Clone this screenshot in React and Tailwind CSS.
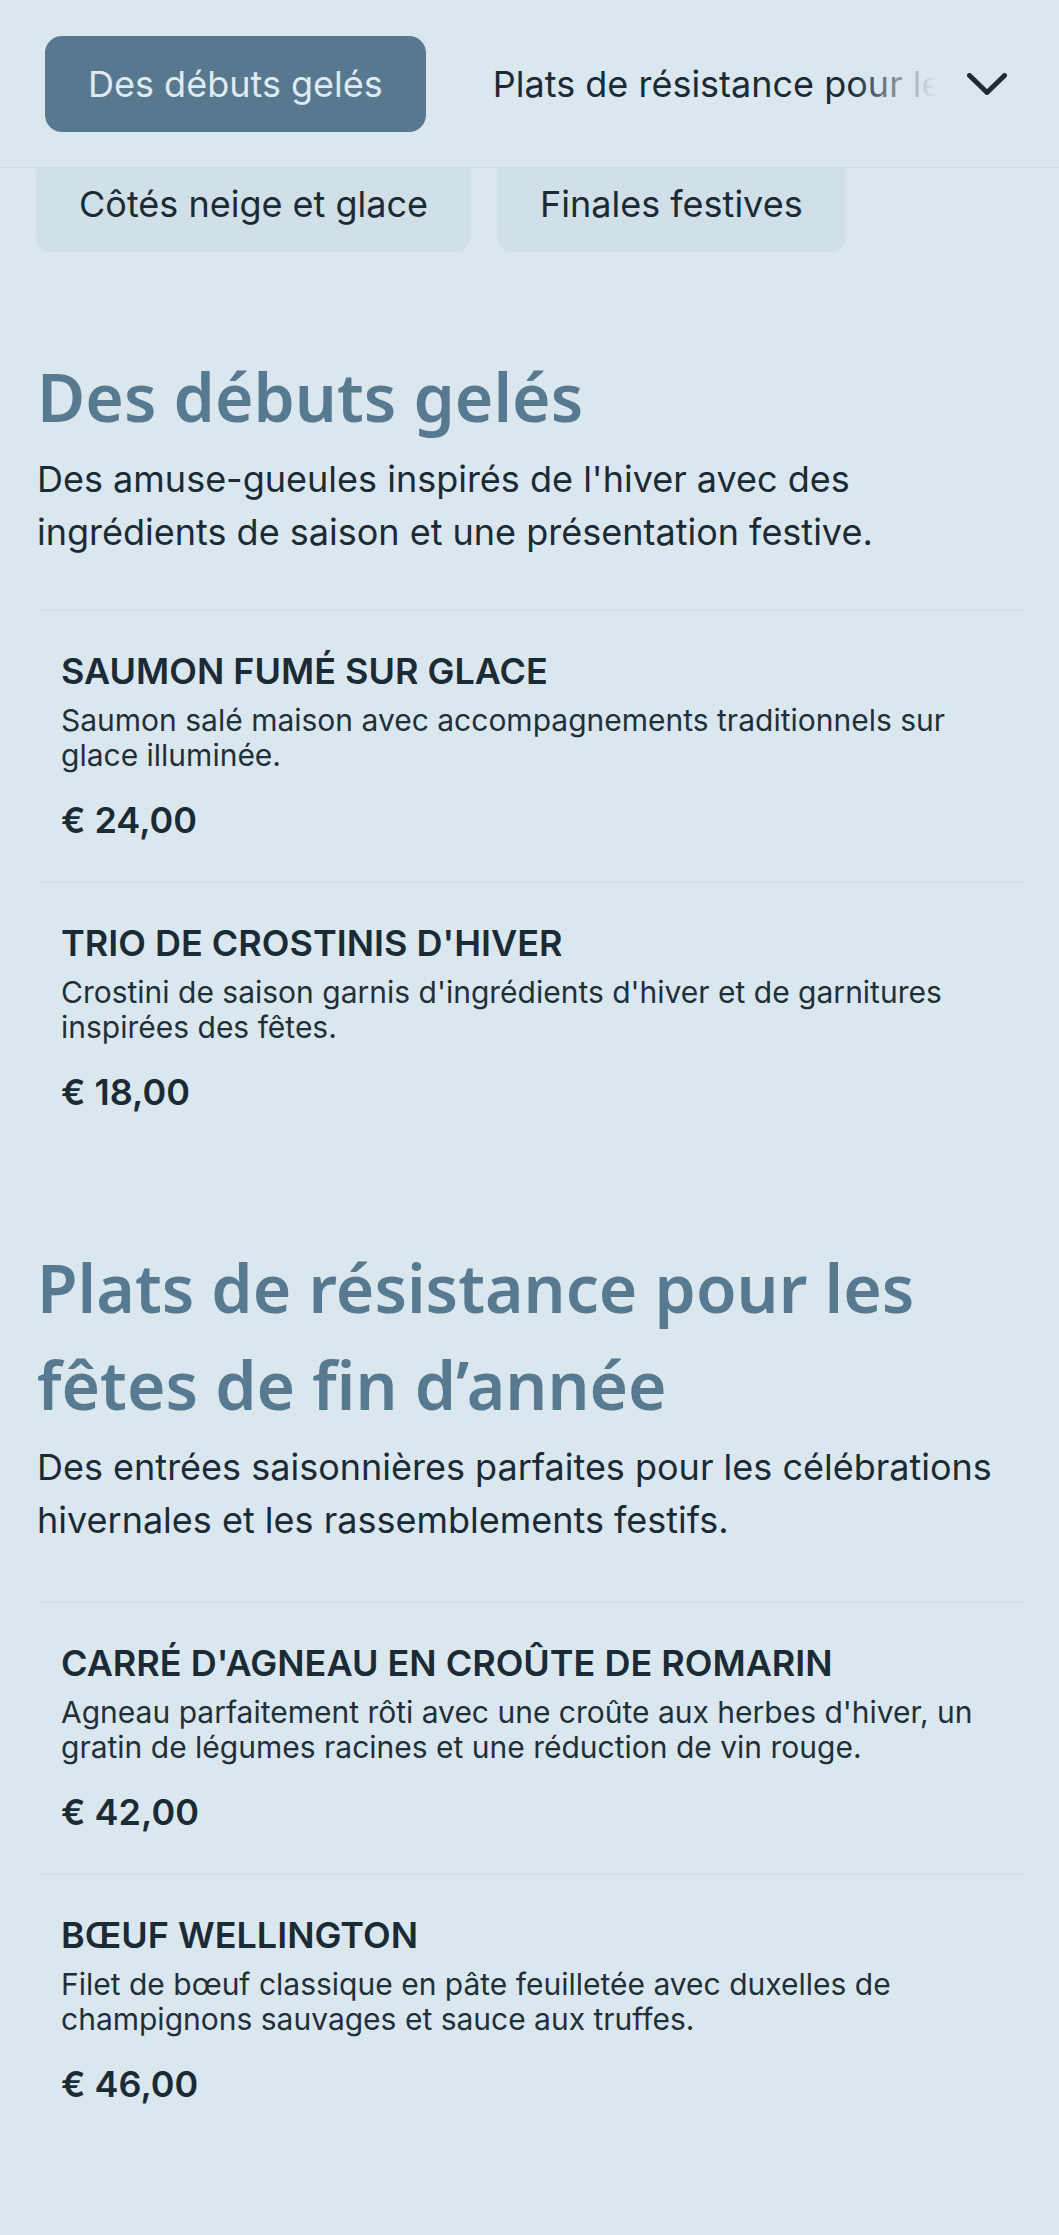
import React from 'react';

const sections = [
  {
    id: 'debuts',
    title: 'Des débuts gelés',
    desc: "Des amuse-gueules inspirés de l'hiver avec des ingrédients de saison et une présentation festive.",
    items: [
      {
        name: 'SAUMON FUMÉ SUR GLACE',
        desc: 'Saumon salé maison avec accompagnements traditionnels sur glace illuminée.',
        price: '€ 24,00',
      },
      {
        name: "TRIO DE CROSTINIS D'HIVER",
        desc: "Crostini de saison garnis d'ingrédients d'hiver et de garnitures inspirées des fêtes.",
        price: '€ 18,00',
      },
    ],
  },
  {
    id: 'plats',
    title: 'Plats de résistance pour les fêtes de fin d’année',
    desc: 'Des entrées saisonnières parfaites pour les célébrations hivernales et les rassemblements festifs.',
    items: [
      {
        name: "CARRÉ D'AGNEAU EN CROÛTE DE ROMARIN",
        desc: "Agneau parfaitement rôti avec une croûte aux herbes d'hiver, un gratin de légumes racines et une réduction de vin rouge.",
        price: '€ 42,00',
      },
      {
        name: 'BŒUF WELLINGTON',
        desc: 'Filet de bœuf classique en pâte feuilletée avec duxelles de champignons sauvages et sauce aux truffes.',
        price: '€ 46,00',
      },
    ],
  },
];

const ChevronDown = () => (
  <svg width="40" height="22" viewBox="0 0 40 22" fill="none">
    <polyline
      points="2.5,2.5 20,19.5 37.5,2.5"
      stroke="#1d2c35"
      strokeWidth="5"
      strokeLinecap="round"
      strokeLinejoin="round"
    />
  </svg>
);

const MenuItem = ({ item }) => (
  <div className="border-t border-[#cfdce5] pl-[24px] pr-[25px] pt-[38px] pb-[40px]">
    <h3 className="text-[36px] leading-[44px] font-semibold text-[#1a2b35]">{item.name}</h3>
    <p className="mt-[10px] text-[30px] leading-[35px] text-[#1f3039]">{item.desc}</p>
    <p className="mt-[25px] text-[36px] leading-[44px] font-semibold text-[#1a2b35]">{item.price}</p>
  </div>
);

const Section = ({ section, first }) => (
  <section className={first ? 'pt-[96px]' : 'pt-[85px]'}>
    <h2 className="max-w-[930px] font-['Noto_Sans',sans-serif] text-[66px] leading-[97px] font-semibold text-[#587a90]">
      {section.title}
    </h2>
    <p className="mt-[8px] text-[36px] leading-[53px] text-[#1a2b35]">{section.desc}</p>
    <div className={first ? 'mt-[51px]' : 'mt-[55px]'}>
      {section.items.map((item) => (
        <MenuItem key={item.name} item={item} />
      ))}
    </div>
  </section>
);

export default function App() {
  return (
    <div className="min-h-screen bg-[#dbe7ef] font-['Inter',sans-serif] text-[#1a2b35]">
      <header className="flex h-[168px] items-center border-b border-[#cfdce5]">
        <div className="relative flex-1 overflow-hidden pl-[45px]">
          <div className="flex gap-6 whitespace-nowrap">
            <button className="h-[96px] shrink-0 rounded-[17px] bg-[#57788e] px-[43px] text-[36px] text-[#dfeaf1]">
              Des débuts gelés
            </button>
            <button className="h-[96px] shrink-0 rounded-[17px] px-[43px] text-[36px] text-[#1a2b35]">
              Plats de résistance pour les fêtes de fin d’année
            </button>
          </div>
          <div className="absolute inset-y-0 right-0 w-[95px] bg-linear-to-l from-[#dbe7ef] from-10% to-transparent" />
        </div>
        <button className="shrink-0 pl-[22px] pr-[52px]">
          <ChevronDown />
        </button>
      </header>

      <div className="h-[84px] overflow-hidden">
        <div className="-mt-[12px] flex gap-[26px] pl-[36px]">
          <button className="h-[96px] rounded-[17px] bg-[#d1dfe8] px-[43px] text-[36px] text-[#1a2b35] shadow-[0_1px_2px_rgba(0,0,0,0.04)]">
            Côtés neige et glace
          </button>
          <button className="h-[96px] rounded-[17px] bg-[#d1dfe8] px-[43px] text-[36px] text-[#1a2b35] shadow-[0_1px_2px_rgba(0,0,0,0.04)]">
            Finales festives
          </button>
        </div>
      </div>

      <main className="pl-[37px] pr-[35px] pb-[80px]">
        {sections.map((s, i) => (
          <Section key={s.id} section={s} first={i === 0} />
        ))}
      </main>
    </div>
  );
}
